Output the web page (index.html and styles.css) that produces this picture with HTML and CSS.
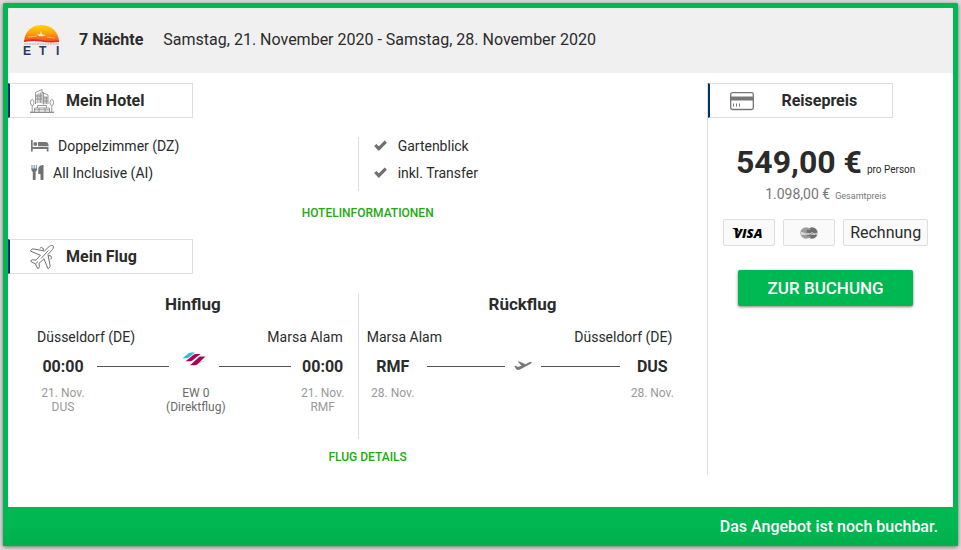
FILE: index.html
```
<!DOCTYPE html>
<html lang="de">
<head>
    <meta charset="UTF-8">
    <meta name="viewport" content="width=device-width, initial-scale=1.0">
    <title>Angebot</title>
    <link rel="stylesheet" href="styles.css">
</head>
<body>
    <div class="offer">
        <header class="offer-header">
            <svg class="logo" viewBox="0 -3 38 38" role="img" aria-label="ETI">
                <defs>
                    <linearGradient id="sun" x1="0" y1="0" x2="0" y2="1">
                        <stop offset="0" stop-color="#ffd800"/>
                        <stop offset="0.55" stop-color="#ff9a10"/>
                        <stop offset="1" stop-color="#f4501c"/>
                    </linearGradient>
                </defs>
                <path d="M1 17C2 7 9 1 18.500 1S35 7 36 17z" fill="url(#sun)"/>
                <path d="M14 10l3 0.500 1-4 1 4 4 0.500-4 1.200-3-0.200z" fill="#fff4d0"/>
                <path d="M5 13l9-1M24 13l8 1" stroke="#ffc070" stroke-width="0.8"/>
                <path d="M1 17.300q9-2 17-0.500t18 0.500" fill="none" stroke="#e8281e" stroke-width="1.600"/>
                <path d="M1 20h35" stroke="#c4c0c8" stroke-width="1.600" stroke-dasharray="2 0.6"/>
                <text x="0" y="31" class="logo-text">E</text>
                <text x="16" y="31" class="logo-text">T</text>
                <text x="33" y="31" class="logo-text">I</text>
            </svg>
            <strong class="nights">7 Nächte</strong>
            <span>Samstag, 21. November 2020 - Samstag, 28. November 2020</span>
        </header>

        <div class="offer-body">
            <main class="trip">
                <section>
                    <h2 class="tab">
                        <svg class="tab-icon" viewBox="0 0 24 24" fill="none" stroke="#808080" stroke-width="0.8">
                            <path d="M5.500 15V3.500l6.500-3v14M12 3.500h1.500v12M13.500 4l4.500 2v9M7.200 5v9M9 4v10M10.600 3.500v10.500M15 7v8M16.600 7.500v7.500M5.500 7h6.500M5.500 10h6.500M13.500 9h4.500M13.500 12h4.500"/>
                            <ellipse cx="2.200" cy="13.500" rx="1.800" ry="3"/>
                            <ellipse cx="21.800" cy="13.500" rx="1.800" ry="3"/>
                            <path d="M2.200 16.500v6.500M21.800 16.500v6.500M4.500 23v-4h3v-2.500h9V19h3v4M7.500 19h9M5 20.800h14M9 23v-4M15 23v-4"/>
                            <path d="M0 23.300h24" stroke-width="1.200"/>
                        </svg>
                        <span>Mein Hotel</span>
                    </h2>
                    <div class="hotel">
                        <ul class="hotel-col">
                            <li class="room">
                                <svg class="icon-bed" viewBox="0 0 18 12" fill="#777"><path d="M0 0h1.700v7H17.500v4.500h-1.700V9H1.700v2.500H0zM7 2h7.500a3 3 0 0 1 3 3v1.200H7z"/><circle cx="4.300" cy="3.900" r="2"/></svg>
                                <span>Doppelzimmer (DZ)</span>
                            </li>
                            <li class="board">
                                <svg class="icon-food" viewBox="0 0 13 15"><path d="M1 0v4M3.200 0v4M5.400 0v4" stroke="#6fa3cf" stroke-width="1.200"/><path d="M0.300 3.500h5.800c0 2-0.800 2.700-1.500 3.200V14a1.400 1.400 0 0 1-2.800 0V6.700C1.100 6.200 0.300 5.500 0.300 3.500zM12.500 0v14a1.300 1.300 0 0 1-3 0V9H7.300V4C7.300 1.500 9.500 0 12.500 0z" fill="#707070"/></svg>
                                <span>All Inclusive (AI)</span>
                            </li>
                        </ul>
                        <ul class="hotel-col">
                            <li class="feature">
                                <svg class="icon-check" viewBox="0 0 13 11" fill="none" stroke="#707070" stroke-width="3.200"><path d="M1.300 5l3.500 3.600 7-7"/></svg>
                                <span>Gartenblick</span>
                            </li>
                            <li class="feature">
                                <svg class="icon-check" viewBox="0 0 13 11" fill="none" stroke="#707070" stroke-width="3.200"><path d="M1.300 5l3.500 3.600 7-7"/></svg>
                                <span>inkl. Transfer</span>
                            </li>
                        </ul>
                    </div>
                    <p class="more"><a href="#hotel">HOTELINFORMATIONEN</a></p>
                </section>

                <section>
                    <h2 class="tab">
                        <svg class="tab-icon" viewBox="0 0 24 24" fill="none" stroke="#707070" stroke-width="1" stroke-linejoin="round">
                            <path d="M20.500 0.800c1.200-0.500 2.200-0.500 2.600 0 0.500 0.600 0.400 1.500 0 2.600-0.400 0.900-1 1.600-1.800 2.400L18 9.500l2.200 11.700-1.500 2.200h-0.900L14 13.800l-5 4.500 0.400 3.400-1 1.800h-0.800L5.500 18.900 0.900 16.500v-0.800l1.800-1 3.300 0.500 4.400-5L0.600 6.200V5.300l2.200-1.500L14.500 6l3.500-3.400c0.800-0.900 1.600-1.500 2.500-1.800z"/>
                            <path d="M9.800 3.300l1.500-0.800 1.800 0.800 0.300 2.200M20.700 14.200l0.900-1.500-0.800-1.800-2.400-0.300M5.500 18.900L8 16.500M11 13.500l7.500-8"/>
                        </svg>
                        <span>Mein Flug</span>
                    </h2>
                    <div class="flights">
                        <div class="flight">
                            <h3>Hinflug</h3>
                            <div class="cities">
                                <span>Düsseldorf (DE)</span>
                                <span>Marsa Alam</span>
                            </div>
                            <div class="route">
                                <strong class="stop">00:00</strong>
                                <span class="line"></span>
                                <span class="carrier">
                                    <svg class="icon-airline" viewBox="0 0 24 14">
                                        <path d="M0.500 6.200L6.500 1.200C7.200 0.700 8 0.400 9 0.400h4L7.500 5c-1 0.800-2 1.200-3.200 1.200z" fill="#35bdd8"/>
                                        <path d="M3.500 9.300L11 3.200C12 2.400 13 2.100 14 2.100h4.500L11 8c-1.200 0.900-2 1.300-3.300 1.300z" fill="#b0005c"/>
                                        <path d="M14 13c3-0.500 5-3.700 9.700-3.700L18 9.200 13 12z" fill="#b8b8b8"/>
                                        <path d="M8 13.200l8-7.300c1-0.900 2-1.300 3.200-1.300h4.300l-8 7.300c-1 0.900-2 1.300-3.200 1.300z" fill="#a80058"/>
                                    </svg>
                                </span>
                                <span class="line"></span>
                                <strong class="stop stop-end">00:00</strong>
                            </div>
                            <div class="details">
                                <div class="stop">21. Nov.<br>DUS</div>
                                <div class="number">EW 0<br>(Direktflug)</div>
                                <div class="stop stop-end">21. Nov.<br>RMF</div>
                            </div>
                        </div>
                        <div class="flight">
                            <h3>Rückflug</h3>
                            <div class="cities">
                                <span>Marsa Alam</span>
                                <span>Düsseldorf (DE)</span>
                            </div>
                            <div class="route">
                                <strong class="stop">RMF</strong>
                                <span class="line"></span>
                                <span class="carrier carrier-small">
                                    <svg class="icon-plane" viewBox="0 0 18 10"><path d="M0.300 5l1.500-0.300 2 1.300 3.700-1.300L3.800 0.800l1.700-0.300L11.500 3.300l3.800-2c1.300-0.600 2.300-0.400 2.400 0 0.200 0.500-0.300 1.100-1.500 1.700L6.500 8.300c-1.800 1-3.300 1-4.200 0z" fill="#777"/></svg>
                                </span>
                                <span class="line"></span>
                                <strong class="stop stop-end">DUS</strong>
                            </div>
                            <div class="details">
                                <div class="stop">28. Nov.</div>
                                <div class="number"></div>
                                <div class="stop stop-end">28. Nov.</div>
                            </div>
                        </div>
                    </div>
                    <p class="more"><a href="#flug">FLUG DETAILS</a></p>
                </section>
            </main>

            <aside class="price">
                <h2 class="tab tab-price">
                    <svg class="tab-icon" viewBox="0 0 24 24">
                        <rect x="0.700" y="3.700" width="22.600" height="16.800" rx="1.800" fill="none" stroke="#777" stroke-width="1.300"/>
                        <path d="M0.500 7.500h23v4H0.500z" fill="#777"/>
                        <path d="M3.500 14.500v3M6.500 14.500v3M9.500 14.500v3" stroke="#777"/>
                    </svg>
                    <span>Reisepreis</span>
                </h2>
                <div class="price-body">
                    <p class="per-person"><strong>549,00 €</strong><small>pro Person</small></p>
                    <p class="total">1.098,00 €<small>Gesamtpreis</small></p>
                    <ul class="payments">
                        <li class="card">
                            <svg class="visa" viewBox="0 -3 36 20" role="img" aria-label="VISA">
                                <path d="M1 2h5.500l1.500 4z"/>
                                <text x="3" y="12">VISA</text>
                            </svg>
                        </li>
                        <li class="card">
                            <svg class="mastercard" viewBox="0 0 18 12" role="img" aria-label="MasterCard">
                                <circle cx="6" cy="6" r="5.700" fill="#9c9c9c"/>
                                <circle cx="12" cy="6" r="5.700" fill="#707070"/>
                                <path d="M8 2h2.500M7.500 10h3" stroke="#b5b5b5"/>
                                <text x="1" y="7.500">MasterCard</text>
                            </svg>
                        </li>
                        <li class="invoice">Rechnung</li>
                    </ul>
                    <button type="button" class="book">ZUR BUCHUNG</button>
                </div>
            </aside>
        </div>

        <footer class="offer-footer">Das Angebot ist noch buchbar.</footer>
    </div>
</body>
</html>
```
FILE: styles.css
```
* {
    box-sizing: border-box;
}
body {
    margin: 0;
    padding: 3px 3px 4px;
    background-color: #dcdcdc;
    font-family: Roboto, Arial, sans-serif;
    font-size: 14px;
    color: #2b2b2b;
}
h2, h3, p, ul {
    margin: 0;
    padding: 0;
}
ul {
    list-style: none;
}
svg {
    display: block;
    flex: none;
}
.offer {
    border: 5px solid #00b851;
    border-bottom: 0;
    border-radius: 2px;
    background: #fff;
    box-shadow: 0 1px 4px rgba(0, 0, 0, 0.5);
}
.offer-header {
    display: flex;
    align-items: center;
    height: 65px;
    padding: 0 15px 2px;
    background-color: #f0f0f0;
    font-size: 16px;
}
.logo {
    width: 38px;
    height: 38px;
}
.logo-text {
    font: bold 12px "Liberation Sans", Arial, sans-serif;
    fill: #2c3566;
}
.nights {
    margin: 0 20px 0 18px;
}
.offer-body {
    display: flex;
    align-items: flex-start;
    padding: 10px 0 24px;
}
.trip {
    width: 74%;
}
.tab {
    display: flex;
    align-items: center;
    width: 185px;
    height: 35px;
    padding: 0 20px;
    border: 1px solid #dedede;
    border-left: 2px solid #00356b;
    font-size: 16px;
    font-weight: bold;
}
.tab-icon {
    width: 24px;
    height: 24px;
    margin-right: 12px;
}
.hotel {
    display: flex;
    margin: 19px 0 4px;
}
.hotel-col {
    width: 50%;
    padding-left: 23px;
}
.hotel-col + .hotel-col {
    padding-left: 15px;
    border-left: 1px solid #dedede;
}
.hotel-col li {
    display: flex;
    align-items: center;
    height: 27px;
    padding-bottom: 10px;
}
.icon-bed {
    width: 18px;
    height: 12px;
    margin-right: 9px;
}
.icon-food {
    width: 13px;
    height: 15px;
    margin-right: 9px;
}
.icon-check {
    width: 13px;
    height: 11px;
    margin-right: 11px;
}
.more {
    padding: 9px 0 17px 20px;
    font-size: 12px;
    line-height: 18px;
    text-align: center;
}
.more a {
    color: #22aa11;
    font-weight: 500;
    text-decoration: none;
}
.flights {
    display: flex;
    margin-top: 20px;
    padding: 0 20px;
}
.flight {
    flex: 1;
    height: 145px;
    padding: 0 15px 0 9px;
}
.flight + .flight {
    padding: 0 15px 0 8px;
    border-left: 1px solid #dedede;
}
.flight h3 {
    padding-left: 6px;
    font-size: 17px;
    line-height: 20px;
    text-align: center;
}
.cities {
    display: flex;
    justify-content: space-between;
    margin-top: 14px;
    line-height: 18px;
}
.route {
    display: flex;
    align-items: center;
    height: 20px;
    margin-top: 10px;
    font-size: 16px;
}
.stop {
    display: flex;
    flex: none;
    justify-content: center;
    width: 52px;
    text-align: center;
    white-space: nowrap;
}
.stop-end {
    width: 40px;
}
.line {
    flex: 1;
    height: 1px;
    background-color: #555;
}
.stop + .line {
    margin-left: 8px;
}
.carrier + .line {
    margin-right: 12px;
}
.carrier {
    display: flex;
    flex: none;
    justify-content: center;
    width: 50px;
    padding-bottom: 14px;
}
.carrier-small {
    width: 36px;
    padding-bottom: 0;
}
.icon-airline {
    width: 24px;
    height: 14px;
}
.icon-plane {
    width: 18px;
    height: 10px;
}
.details {
    display: flex;
    margin-top: 10px;
    color: #999;
    font-size: 12px;
    line-height: 14px;
}
.number {
    flex: 1;
    color: #6b6b6b;
    text-align: center;
}
.price {
    flex: 1;
    height: 392px;
    border-left: 1px solid #dedede;
}
.tab-price span {
    flex: 1;
    text-align: center;
}
.price-body {
    display: flex;
    flex-direction: column;
    align-items: center;
    padding: 24px 10px 0 0;
}
.per-person, .total {
    display: flex;
    align-items: baseline;
    height: 40px;
    gap: 5px;
    white-space: nowrap;
}
.per-person strong {
    font-size: 32px;
    line-height: 40px;
}
.per-person small {
    font-size: 10px;
}
.total {
    height: 24px;
    color: #777;
    line-height: 24px;
}
.total small {
    font-size: 9px;
}
.payments {
    display: flex;
    gap: 8px;
    margin-top: 13px;
}
.payments li {
    display: flex;
    align-items: center;
    justify-content: center;
    height: 27px;
    border: 1px solid #dedede;
    border-radius: 2px;
    background-color: #fafafa;
}
.card {
    width: 52px;
}
.invoice {
    padding: 0 6px;
    font-size: 16px;
}
.visa {
    width: 36px;
    height: 20px;
}
.visa text {
    font: italic 800 13px "Open Sans", sans-serif;
}
.mastercard {
    width: 18px;
    height: 12px;
}
.mastercard text {
    font: bold 3px "Liberation Sans", sans-serif;
    fill: #fff;
}
.book {
    width: 175px;
    height: 36px;
    margin-top: 24px;
    padding: 0;
    border: 0;
    border-radius: 2px;
    background-color: #00b851;
    box-shadow: 0 1px 3px rgba(0, 0, 0, 0.5);
    color: #fff;
    font-family: inherit;
    font-size: 17px;
    font-weight: 500;
    cursor: pointer;
}
.offer-footer {
    margin: 0 -5px;
    padding: 0 20px;
    background: linear-gradient(#00b851 40%, #00b04d);
    color: #fff;
    font-size: 16px;
    font-weight: 500;
    line-height: 39px;
    text-align: right;
}
```
